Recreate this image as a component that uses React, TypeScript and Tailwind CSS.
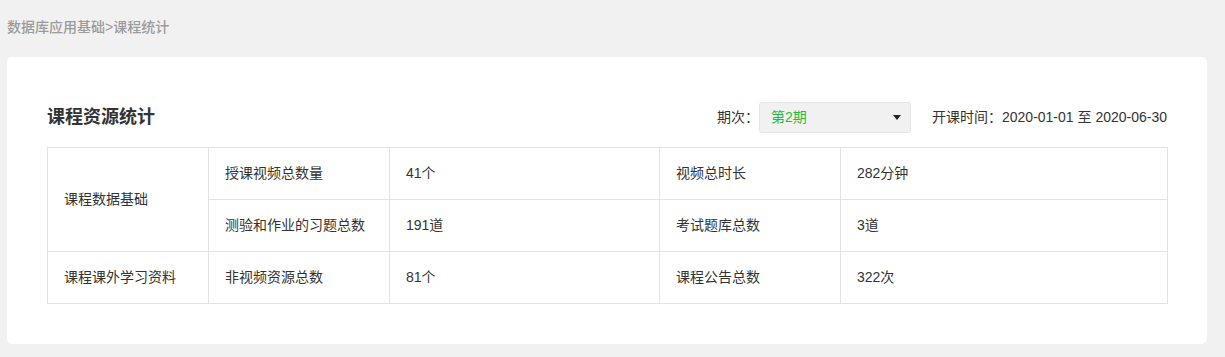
const font = {
  fontFamily: '"Liberation Sans", "Noto Sans CJK SC", sans-serif',
};

const rows = [
  { label: "授课视频总数量", value: "41个", label2: "视频总时长", value2: "282分钟" },
  { label: "测验和作业的习题总数", value: "191道", label2: "考试题库总数", value2: "3道" },
  { label: "非视频资源总数", value: "81个", label2: "课程公告总数", value2: "322次" },
];

function Cell({ children, rowSpan }: { children: React.ReactNode; rowSpan?: number }) {
  return (
    <td
      rowSpan={rowSpan}
      className="h-[52px] border border-[#e3e3e3] px-[16px] text-[14px] text-[#333]"
    >
      {children}
    </td>
  );
}

export default function App() {
  return (
    <div className="min-h-[357px] bg-[#f1f1f1]" style={font}>
      <div className="h-[57px] pl-[7px] pt-[17px] text-[14px] font-medium leading-[20px] text-[#9b9b9b]">
        数据库应用基础&gt;课程统计
      </div>
      <div className="ml-[7px] w-[1200px] rounded-[5px] bg-white px-[40px] pt-[45px] pb-[40px]">
        <div className="flex h-[31px] items-center">
          <h2 className="flex-1 text-[18px] font-bold text-[#333]">课程资源统计</h2>
          <span className="text-[14px] text-[#333]">期次：</span>
          <div className="flex h-[31px] w-[152px] items-center justify-between rounded-[3px] border border-[#e6e6e6] bg-[#f1f1f1] pl-[11px] pr-[9px]">
            <span className="text-[14px] text-[#1fbf3b]">第2期</span>
            <svg width="8" height="5" viewBox="0 0 8 5">
              <path d="M0 0h8L4 5z" fill="#222" />
            </svg>
          </div>
          <span className="ml-[21px] text-[14px] text-[#333]">
            开课时间：2020-01-01 至 2020-06-30
          </span>
        </div>
        <table className="mt-[14px] w-[1120px] table-fixed border-collapse">
          <colgroup>
            <col className="w-[161px]" />
            <col className="w-[181px]" />
            <col className="w-[270px]" />
            <col className="w-[181px]" />
            <col className="w-[327px]" />
          </colgroup>
          <tbody>
            {rows.map((r, i) => (
              <tr key={i}>
                {i === 0 && <Cell rowSpan={2}>课程数据基础</Cell>}
                {i === 2 && <Cell>课程课外学习资料</Cell>}
                <Cell>{r.label}</Cell>
                <Cell>{r.value}</Cell>
                <Cell>{r.label2}</Cell>
                <Cell>{r.value2}</Cell>
              </tr>
            ))}
          </tbody>
        </table>
      </div>
    </div>
  );
}
